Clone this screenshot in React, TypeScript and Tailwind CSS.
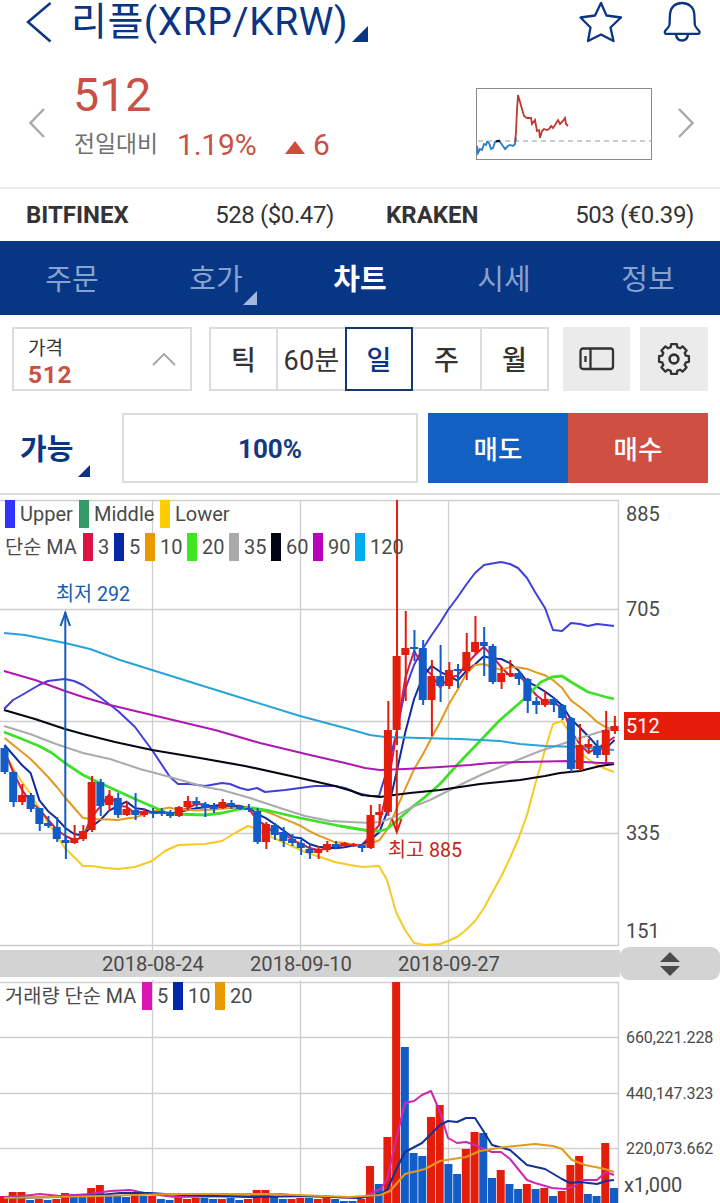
import React from "react";

type Pt = [number, number];
type Dir = "R" | "B";
// direction, body top, body bottom, wick top, wick bottom
type Candle = [Dir, number, number, number, number];

const RED = "#e51c0a";
const BLUE = "#125cc8";

const candles: Candle[] = [
  ["B", 748, 772, 746, 774], ["B", 772, 802, 771, 807], ["R", 795, 802, 784, 805], ["B", 795, 809, 793, 812],
  ["B", 808, 824, 808, 831], ["B", 823, 826, 816, 828], ["B", 827, 839, 817, 842], ["B", 840, 843, 837, 859],
  ["R", 838, 843, 825, 844], ["R", 831, 839, 825, 841], ["R", 782, 830, 776, 832], ["B", 782, 806, 779, 816],
  ["R", 796, 805, 790, 811], ["B", 798, 815, 793, 818], ["R", 809, 815, 801, 816], ["B", 810, 815, 793, 820],
  ["R", 811, 815, 809, 817], ["B", 811, 813, 808, 818], ["B", 811, 813, 808, 816], ["B", 812, 816, 810, 818],
  ["R", 807, 816, 806, 817], ["R", 801, 807, 796, 810], ["B", 801, 804, 797, 807], ["B", 804, 808, 802, 817],
  ["B", 806, 809, 803, 813], ["R", 802, 808, 799, 809], ["B", 803, 806, 800, 809], ["B", 806, 809, 805, 810],
  ["B", 808, 810, 804, 812], ["B", 811, 842, 808, 844], ["R", 824, 842, 822, 849], ["B", 825, 835, 823, 840],
  ["B", 832, 841, 827, 847], ["B", 839, 843, 834, 846], ["B", 843, 848, 840, 855], ["B", 849, 853, 844, 859],
  ["R", 849, 853, 846, 859], ["R", 844, 850, 841, 852], ["B", 844, 847, 841, 849], ["R", 843, 846, 842, 847],
  ["R", 844, 846, 843, 847], ["B", 845, 848, 844, 852], ["R", 815, 848, 805, 849], ["R", 812, 815, 804, 825],
  ["R", 730, 812, 701, 816], ["R", 656, 730, 500, 745], ["R", 648, 655, 611, 701], ["B", 647, 649, 630, 661],
  ["B", 648, 700, 640, 705], ["R", 676, 700, 660, 736], ["B", 676, 686, 645, 702], ["R", 670, 686, 662, 689],
  ["B", 669, 671, 664, 688], ["R", 652, 671, 633, 680], ["R", 642, 652, 616, 654], ["B", 642, 646, 627, 676],
  ["B", 646, 682, 644, 684], ["R", 673, 682, 667, 689], ["R", 673, 675, 660, 677], ["B", 673, 679, 671, 685],
  ["B", 679, 701, 678, 713], ["B", 701, 705, 697, 714], ["R", 699, 705, 691, 707], ["B", 699, 705, 697, 712],
  ["B", 705, 718, 704, 720], ["B", 718, 769, 717, 772], ["R", 745, 769, 724, 771], ["R", 744, 747, 739, 754],
  ["B", 746, 755, 740, 758], ["R", 730, 755, 711, 762], ["R", 726, 731, 716, 734],
];

const volumes: [Dir, number][] = [
  ["R", 1196], ["R", 1192], ["R", 1192], ["B", 1200], ["R", 1199], ["B", 1200], ["R", 1199], ["R", 1193], ["B", 1194],
  ["B", 1196], ["R", 1188], ["R", 1185], ["B", 1196], ["B", 1196], ["B", 1197], ["R", 1195], ["B", 1196], ["R", 1196],
  ["B", 1199], ["B", 1200], ["R", 1198], ["R", 1199], ["R", 1198], ["B", 1198], ["B", 1199], ["R", 1199], ["B", 1198],
  ["B", 1200], ["R", 1199], ["R", 1190], ["R", 1190], ["B", 1197], ["B", 1199], ["R", 1199], ["R", 1198], ["B", 1198],
  ["R", 1199], ["R", 1198], ["B", 1199], ["B", 1201], ["B", 1201], ["R", 1199], ["R", 1166], ["B", 1184], ["R", 1137],
  ["R", 982], ["B", 1047], ["B", 1153], ["B", 1156], ["R", 1117], ["R", 1105], ["B", 1164], ["B", 1174], ["R", 1149],
  ["R", 1132], ["B", 1133], ["B", 1178], ["R", 1170], ["B", 1184], ["B", 1189], ["R", 1184], ["B", 1189], ["R", 1188],
  ["B", 1196], ["R", 1191], ["R", 1165], ["R", 1156], ["B", 1194], ["B", 1196], ["R", 1143], ["B", 1188],
];

const xAt = (i: number) => 4.5 + i * 8.714;
const closes = candles.map(([d, top, bottom]) => (d === "R" ? top : bottom));

// Moving average of the closes; `head` covers the bars whose window starts before the chart.
function average(n: number, head: number[]): Pt[] {
  return closes.map((_, i): Pt => {
    if (i < n - 1) return [xAt(i), head[i]];
    let sum = 0;
    for (let k = 0; k < n; k++) sum += closes[i - k];
    return [xAt(i), sum / n];
  });
}

const ma3 = average(3, [751, 772]);
const ma5 = average(5, [745, 755, 765, 773]);
const ma10 = average(10, [738, 745, 752, 759, 768, 777, 787, 798, 808]);

const ma20 = "4,732 22,739 39,746 52,753 65,763 83,775 100,783 135,799 165,812 175,814 205,815 222,813 240,809 253,808 270,811 300,818 340,826 370,831 380,831 387,829 400,818 411,808 425,797 440,784 458,764 480,741 500,720 523,700 541,682 552,677 562,676 571,682 588,692 606,697 614,699";
const ma35 = "4,726 30,734 56,744 83,753 110,759 140,769 170,777 205,787 222,790 250,798 280,808 305,816 330,821 350,822 370,823 380,822 392,818 410,808 430,800 450,790 466,782 483,774 500,767 520,759 540,751 562,744 580,738 606,730 614,727";
const ma60 = "4,710 35,719 65,729 83,734 115,742 152,750 200,758 245,766 300,778 335,786 352,791 362,795 380,797 394,795 410,793 440,790 480,784 520,780 545,776 560,773 580,771 600,766 614,764";
const ma90 = "4,671 35,680 65,691 83,697 110,705 152,715 215,730 260,743 310,755 345,763 365,768 380,770 405,769 440,767 470,765 490,763 520,762 570,761 600,763 614,763";
const ma120 = "4,633 25,635 50,640 65,643 90,649 120,660 152,670 200,685 245,699 300,716 345,728 370,735 385,737 420,738 460,739 500,741 520,744 545,746 580,747 600,749 614,750";
const upper = "4,709 13,700 22,695 39,685 48,681 56,680 65,679 74,681 83,685 92,691 118,711 135,727 152,750 170,777 178,784 190,784 205,786 222,783 230,784 240,788 248,790 257,788 265,792 275,791 285,790 300,788 315,786 335,786 345,788 357,793 370,796 379,796 387,770 396,735 405,690 414,665 422,650 431,636 440,623 448,610 457,598 466,585 475,573 484,565 492,563.5 501,562 510,564 518,568 527,578 535,592 545,608 553,630 562,631 571,623 580,624 588,626 597,624 606,625 614,626";
const lower = "4,752 13,768 22,782 30,793 39,808 48,823 56,835 65,848 74,857 83,866 92,866 105,868 118,869 135,867 152,861 165,851 178,845 205,844 222,841 235,833 248,826 257,829 265,834 285,843 305,852 320,857 335,862 350,865 362,867 379,866 387,880 396,912 405,930 414,943 425,945 440,944 448,941 457,937 466,930 475,921 484,908 492,893 501,877 510,858 518,840 527,815 535,785 545,750 553,724 562,721 571,735 580,752 588,759 597,765 606,769 614,772";

const vol5 = "4,1197 22,1196 40,1194 60,1196 90,1194 110,1191 130,1190 150,1194 175,1197 250,1196 280,1194 300,1196 360,1198 370,1194 380,1189 387,1180 396,1140 405,1103 414,1101 422,1095 431,1091 440,1112 448,1138 457,1143 466,1142 475,1145 484,1149 492,1152 501,1152 510,1159 527,1180 535,1183 552,1188 565,1189 575,1186 582,1180 597,1180 606,1172 614,1175";
const vol10 = "4,1198 60,1197 100,1195 120,1193 150,1193 180,1195 250,1197 310,1196 360,1198 380,1194 387,1190 396,1170 405,1152 422,1143 440,1125 448,1121 457,1122 466,1118 475,1118 484,1132 492,1145 510,1150 527,1165 545,1169 562,1179 570,1183 580,1182 597,1184 606,1181 614,1180";
const vol20 = "4,1198 100,1196 170,1194 270,1194 350,1197 380,1195 390,1191 405,1174 425,1169 440,1161 466,1157 480,1151 505,1147 535,1144 553,1146 562,1149 572,1160 585,1165 605,1169 614,1172";

const join = (pts: Pt[]) => pts.map(([x, y]) => `${x.toFixed(1)},${y.toFixed(1)}`).join(" ");

function Line({ points, color, width = 2 }: { points: string; color: string; width?: number }) {
  return <polyline points={points} fill="none" stroke={color} strokeWidth={width} strokeLinejoin="round" />;
}

function PriceChart() {
  return (
    <svg width="620" height="455" viewBox="0 495 620 455" className="block">
      <g stroke="#cfcfcf" strokeWidth="1.3">
        {[500.5, 609.5, 721.5, 833.5, 945.5].map((y) => <line key={y} x1="0" x2="618.5" y1={y} y2={y} />)}
        {[152.5, 300.5, 448.5, 618.5].map((x) => <line key={x} x1={x} x2={x} y1="500" y2={x === 618.5 ? 946 : 950} />)}
      </g>
      <Line points={lower} color="#f5cb22" />
      <Line points={upper} color="#3f3fdc" />
      <Line points={join(ma3)} color="#d81a4c" />
      <Line points={join(ma5)} color="#0e2ba0" />
      <Line points={join(ma10)} color="#e4981c" />
      <Line points={ma20} color="#3fe02a" width={2.8} />
      <Line points={ma35} color="#ababab" />
      <Line points={ma60} color="#070714" width={2.2} />
      <Line points={ma90} color="#b018b4" />
      <Line points={ma120} color="#27a5da" />
      {candles.map(([d, top, bottom, high, low], i) => (
        <g key={i} fill={d === "R" ? RED : BLUE}>
          <rect x={xAt(i) - 0.6} y={high} width="2" height={low - high} />
          <rect x={xAt(i) - 4} y={top} width="8" height={bottom - top} />
        </g>
      ))}
      <g stroke="#125cb8" fill="none" strokeWidth="2">
        <path d="M65.3 842V612" />
        <path d="M60.5 626L65.3 613L70 626" />
      </g>
      <g stroke="#d8220f" fill="none" strokeWidth="2">
        <path d="M396.8 750V832" />
        <path d="M392 819L396.8 832L401.5 819" />
      </g>
      <g className="font-['Roboto','Noto_Sans_CJK_KR',sans-serif]" fontSize="20">
        <text x="56" y="601" fill="#125cb8" textLength="74" lengthAdjust="spacingAndGlyphs">최저 292</text>
        <text x="388" y="857" fill="#c4271a" textLength="74" lengthAdjust="spacingAndGlyphs">최고 885</text>
      </g>
    </svg>
  );
}

function VolumeChart() {
  return (
    <svg width="620" height="223" viewBox="0 980 620 223" className="block">
      <g stroke="#cfcfcf" strokeWidth="1.3">
        {[982.5, 1037.5, 1093.5, 1148.5].map((y) => <line key={y} x1="0" x2="618.5" y1={y} y2={y} />)}
        {[152.5, 300.5, 448.5, 618.5].map((x) => <line key={x} x1={x} x2={x} y1={x === 618.5 ? 982 : 980} y2="1203" />)}
      </g>
      {volumes.map(([d, top], i) => (
        <rect key={i} x={xAt(i) - 4.5} y={top} width="8" height={1203 - top} fill={d === "R" ? RED : BLUE} />
      ))}
      <Line points={vol5} color="#cf27b4" />
      <Line points={vol10} color="#152f96" />
      <Line points={vol20} color="#e4981c" />
    </svg>
  );
}

function Corner({ className }: { className: string }) {
  return (
    <svg viewBox="0 0 10 10" className={className} fill="currentColor">
      <path d="M10 0V10H0Z" />
    </svg>
  );
}

function Gear() {
  const pts: string[] = [];
  for (let k = 0; k < 8; k++) {
    const a = (k * Math.PI) / 4 - Math.PI / 2;
    for (const [r, o] of [[12.3, -0.27], [15.2, -0.19], [15.2, 0.19], [12.3, 0.27]]) {
      pts.push(`${(17 + r * Math.cos(a + o)).toFixed(2)},${(17 + r * Math.sin(a + o)).toFixed(2)}`);
    }
  }
  return (
    <svg width="34" height="34" viewBox="0 0 34 34" fill="none" stroke="#333" strokeWidth="2.3" strokeLinejoin="round">
      <polygon points={pts.join(" ")} />
      <circle cx="17" cy="17" r="4.4" strokeWidth="2.6" />
    </svg>
  );
}

function Header() {
  return (
    <header className="flex h-[44px] items-center text-[#0a3583]">
      <svg width="26" height="42" viewBox="0 0 26 42" className="ml-[26px]" fill="none" stroke="currentColor" strokeWidth="2.5">
        <path d="M24.5 2L2 21L24.5 40.500" />
      </svg>
      <h1 className="ml-[19px] w-[276px] whitespace-nowrap text-[39px] leading-[44px] tracking-[0.55px]">리플(XRP/KRW)</h1>
      <Corner className="ml-[5px] mt-[24px] h-[16px] w-[16px]" />
      <svg width="44" height="44" viewBox="0 0 44 44" className="ml-[211px]" fill="none" stroke="currentColor" strokeWidth="2.3" strokeLinejoin="round">
        <path d="M22 3L27.500 15.500L42 17.500L31.500 27.500L34.500 41L22 34.500L9 41L11.500 27.500L1.500 17.500L16 15.500Z" />
      </svg>
      <svg width="40" height="44" viewBox="0 0 40 44" className="ml-[39px]" fill="none" stroke="currentColor" strokeWidth="2.300" strokeLinejoin="round">
        <path d="M4 33.800H36.500C37.500 33.800 38 32 37 30.800C34 27.500 33 26.500 32.800 24.500L32.300 14C31.800 7 26.500 3 20 3C13.500 3 8.500 7 8 14L7.500 24.500C7.300 26.500 6.300 27.500 3.300 30.800C2.300 32 2.800 33.800 4 33.800Z" />
        <path d="M14 34.500C14.500 38.500 17 40.500 20 40.500C23 40.500 25.500 38.500 26 34.500" />
      </svg>
    </header>
  );
}

function PriceSummary() {
  return (
    <section className="flex h-[145px] items-start border-b-2 border-[#ebebeb] text-[#c95046]">
      <svg width="16" height="30" viewBox="0 0 16 30" className="ml-[29px] mt-[64px]" fill="none" stroke="#a9a9a9" strokeWidth="2.4">
        <path d="M15 1L1.500 15L15 29" />
      </svg>
      <div className="ml-[28px] w-[403px]">
        <p className="mt-[26px] text-[46.500px] leading-[50px]">512</p>
        <div className="mt-[9px] flex items-center leading-[32px]">
          <span className="w-[104px] pl-px text-[22.800px] text-[#707070]">전일대비</span>
          <span className="w-[108px] text-[30px] tracking-[-0.2px]">1.19%</span>
          <svg width="20" height="13" viewBox="0 0 20 13" className="mr-[8px] mt-[4px]" fill="#d04a3f"><path d="M10 0L20 13H0Z" /></svg>
          <span className="text-[30px]">6</span>
        </div>
      </div>
      <svg width="176" height="72" viewBox="476 88 176 72" className="mt-[44px]" fill="none">
        <rect x="476.500" y="88.500" width="175" height="71" stroke="#8c8c8c" />
        <path d="M478 141H651" stroke="#bdbdbd" strokeWidth="1.500" strokeDasharray="5 4" />
        <polyline points="477,146 478,153 480,149 482,150 484,144 486,145 487,142 489,143 491,149 493,148 495,142 497,141 500,142 503,146 505,149 508,146 510,145 513,146 515,144 516,137" stroke="#2a7cc4" strokeWidth="1.800" />
        <path d="M496 141.500L500 140.500" stroke="#111" strokeWidth="2" />
        <polyline points="515,142 516,132 517,110 518,95 520,102 522,109 524,116 527,118 531,118 532,124 535,120 537,131 539,130 540,138 542,131 544,129 547,130 549,129 551,126 553,128 555,125 558,120 560,124 563,121 565,118 566,124 568,126" stroke="#c0392f" strokeWidth="1.800" />
      </svg>
      <svg width="16" height="30" viewBox="0 0 16 30" className="ml-[26px] mt-[64px]" fill="none" stroke="#a9a9a9" strokeWidth="2.4">
        <path d="M1 1L14.500 15L1 29" />
      </svg>
    </section>
  );
}

function Exchanges() {
  const rows = [["BITFINEX", "528 ($0.47)"], ["KRAKEN", "503 (€0.39)"]];
  return (
    <section className="grid h-[52px] grid-cols-2 text-[24px] leading-[53px] text-[#333]">
      {rows.map(([name, value]) => (
        <div key={name} className="flex justify-between pl-[26px] pr-[26px]">
          <b className="font-bold">{name}</b>
          <span className="tracking-[-0.4px]">{value}</span>
        </div>
      ))}
    </section>
  );
}

function Tabs() {
  return (
    <nav className="grid h-[74px] grid-cols-5 bg-[#073684] text-center text-[29px] leading-[78px] text-[#88a2d0]">
      <a>주문</a>
      <a className="relative">
        호가
        <Corner className="absolute right-[31px] top-[50px] h-[14px] w-[14px] text-[#a5b8df]" />
      </a>
      <a className="font-bold text-white">차트</a>
      <a>시세</a>
      <a>정보</a>
    </nav>
  );
}

function Toolbar() {
  return (
    <section className="flex h-[76px] pl-[12px] pt-[12px] text-[#333]">
      <div className="flex h-[64px] w-[180px] items-center justify-between border-2 border-[#dcdcdc] pl-[14px] pr-[13px]">
        <div className="pt-[6px]">
          <p className="text-[19px] leading-[25px]">가격</p>
          <p className="text-[24.500px] font-bold leading-[27px] tracking-[0.7px] text-[#c95046]">512</p>
        </div>
        <svg width="24" height="14" viewBox="0 0 24 14" className="mr-[1px]" fill="none" stroke="#a5a5a5" strokeWidth="1.800"><path d="M1 13L12 2L23 13" /></svg>
      </div>
      <div className="ml-[17px] flex h-[64px] text-center text-[27px] leading-[64px]">
        <span className="h-[64px] w-[67px] border-2 border-r-0 border-[#dcdcdc] font-medium leading-[64px]">틱</span>
        <span className="flex h-[64px] w-[69px] justify-center whitespace-nowrap border-2 border-r-0 border-[#dcdcdc] tracking-[0.3px]">60분</span>
        <span className="h-[64px] w-[68px] border-2 border-[#17376f] font-medium text-[#0a3583]">일</span>
        <span className="h-[64px] w-[67px] border-y-2 border-[#dcdcdc] font-medium">주</span>
        <span className="h-[64px] w-[69px] border-2 border-[#dcdcdc] font-medium">월</span>
      </div>
      <button className="ml-[14px] flex h-[64px] w-[67px] items-center justify-center bg-[#ebebeb]">
        <svg width="36" height="24" viewBox="0 0 36 24" fill="none" stroke="#333" strokeWidth="2.300">
          <rect x="1.500" y="1.500" width="32.500" height="20.500" rx="2.500" />
          <path d="M11.500 1.500V22M6.500 9V15" />
        </svg>
      </button>
      <button className="ml-[10px] flex h-[64px] w-[68px] items-center justify-center bg-[#ebebeb]"><Gear /></button>
    </section>
  );
}

function OrderBar() {
  return (
    <section className="flex h-[104px] border-b-2 border-[#dcdcdc] pt-[22px] leading-[73px]">
      <div className="flex w-[122px] text-[#0a3583]">
        <span className="ml-[20px] w-[53px] whitespace-nowrap text-[29px] font-bold leading-[75px]">가능</span>
        <Corner className="ml-[5px] mt-[52px] h-[12px] w-[12px]" />
      </div>
      <div className="h-[70px] w-[296px] border-2 border-[#dcdcdc] text-center text-[26px] font-bold leading-[69px] text-[#14387c]">100%</div>
      <button className="ml-[10px] h-[70px] w-[140px] bg-[#1260c2] text-[26.500px] font-medium text-white">매도</button>
      <button className="h-[70px] w-[140px] bg-[#d04f43] text-[26.500px] font-medium text-white">매수</button>
    </section>
  );
}

function Key({ color, label, className }: { color: string; label: string; className: string }) {
  return (
    <span className={`flex ${className}`}>
      <i className={`block h-[28px] w-[10px] ${color}`} />
      <span className="ml-[5px]">{label}</span>
    </span>
  );
}

export default function App() {
  return (
    <main className="h-[1203px] w-[720px] overflow-hidden bg-white font-['Roboto','Noto_Sans_CJK_KR',sans-serif]">
      <Header />
      <PriceSummary />
      <Exchanges />
      <Tabs />
      <Toolbar />
      <OrderBar />

      <section className="flex h-[455px] text-[20px] text-[#4a4a4a]">
        <div className="relative h-[455px] w-[620px]">
          <PriceChart />
          <div className="absolute left-[5px] top-[5px] whitespace-nowrap leading-[28px]">
            <div className="flex">
              <Key color="bg-[#3333ff]" label="Upper" className="w-[74px]" />
              <Key color="bg-[#339966]" label="Middle" className="w-[81px]" />
              <Key color="bg-[#ffcc00]" label="Lower" className="w-[80px]" />
            </div>
            <div className="mt-[5px] flex">
              <span className="w-[78px] text-[19.800px] leading-[30px]">단순 MA</span>
              <Key color="bg-[#dc1446]" label="3" className="w-[31px]" />
              <Key color="bg-[#0228a8]" label="5" className="w-[31px]" />
              <Key color="bg-[#e89a00]" label="10" className="w-[42px]" />
              <Key color="bg-[#3de61e]" label="20" className="w-[42px]" />
              <Key color="bg-[#aaaaaa]" label="35" className="w-[42px]" />
              <Key color="bg-[#000414]" label="60" className="w-[42px]" />
              <Key color="bg-[#bb00bb]" label="90" className="w-[42px]" />
              <Key color="bg-[#00acee]" label="120" className="w-[50px]" />
            </div>
          </div>
        </div>
        <div className="flex w-[100px] flex-col pl-[4px] leading-[28px]">
          <span className="mt-[5px] pl-[2px]">885</span>
          <span className="mt-[67px] pl-[2px]">705</span>
          <span className="mt-[89px] bg-[#e51c0a] pl-[2px] text-white">512</span>
          <span className="mt-[79px] pl-[2px]">335</span>
          <span className="mt-[70px] pl-[2px]">151</span>
        </div>
      </section>

      <section className="-mt-[3px] flex h-[33px] items-center text-[20.200px] leading-[28px] text-[#4a4a4a]">
        <div className="flex h-[27px] w-[620px] bg-[#d3d3d3] pl-[102px]">
          <span className="w-[148px]">2018-08-24</span>
          <span className="w-[148px]">2018-09-10</span>
          <span>2018-09-27</span>
        </div>
        <div className="flex h-[33px] w-[100px] items-center justify-center rounded-[9px] bg-[#d3d3d3]">
          <svg width="20" height="24" viewBox="0 0 20 24" fill="#4a4a4a"><path d="M10 0L20 10H0ZM10 24L20 14H0Z" /></svg>
        </div>
      </section>

      <section className="flex h-[223px] text-[#4a4a4a]">
        <div className="relative h-[223px] w-[620px]">
          <VolumeChart />
          <div className="absolute left-[5px] top-[2px] flex whitespace-nowrap text-[20px] leading-[28px]">
            <span className="w-[137px] text-[19.800px] leading-[30px]">거래량 단순 MA</span>
            <Key color="bg-[#dc14b4]" label="5" className="w-[31px]" />
            <Key color="bg-[#0228a8]" label="10" className="w-[42px]" />
            <Key color="bg-[#e89a00]" label="20" className="w-[42px]" />
          </div>
        </div>
        <div className="flex w-[100px] flex-col pl-[6px] text-[16px] leading-[20px] tracking-[-0.1px]">
          <span className="mt-[48px]">660,221.228</span>
          <span className="mt-[36px]">440,147.323</span>
          <span className="mt-[35px]">220,073.662</span>
          <span className="-ml-[2px] mt-[16px] text-[20px]">x1,000</span>
        </div>
      </section>
    </main>
  );
}
